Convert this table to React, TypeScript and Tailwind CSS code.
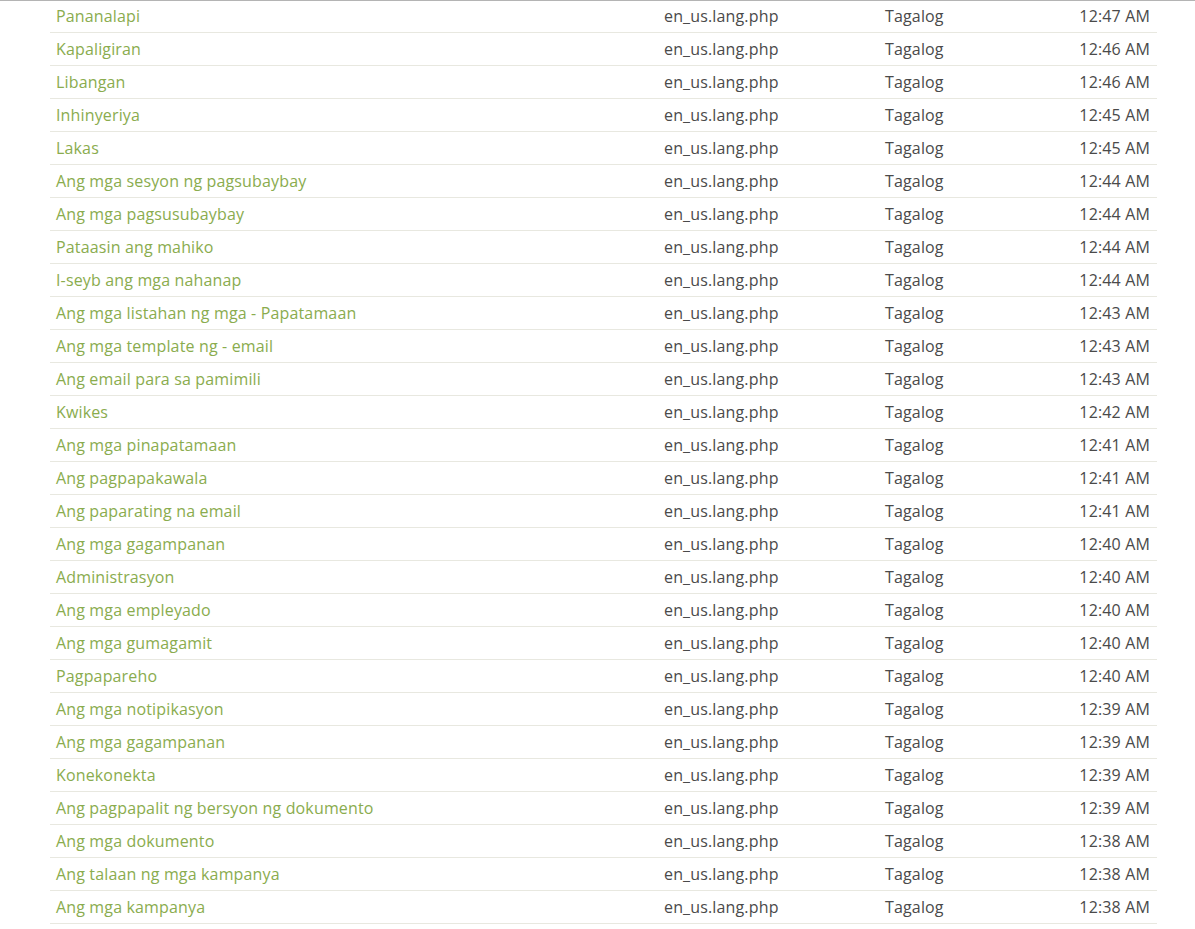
import React from 'react';

const rows: [string, string][] = [
  ['Pananalapi', '12:47 AM'],
  ['Kapaligiran', '12:46 AM'],
  ['Libangan', '12:46 AM'],
  ['Inhinyeriya', '12:45 AM'],
  ['Lakas', '12:45 AM'],
  ['Ang mga sesyon ng pagsubaybay', '12:44 AM'],
  ['Ang mga pagsusubaybay', '12:44 AM'],
  ['Pataasin ang mahiko', '12:44 AM'],
  ['I-seyb ang mga nahanap', '12:44 AM'],
  ['Ang mga listahan ng mga - Papatamaan', '12:43 AM'],
  ['Ang mga template ng - email', '12:43 AM'],
  ['Ang email para sa pamimili', '12:43 AM'],
  ['Kwikes', '12:42 AM'],
  ['Ang mga pinapatamaan', '12:41 AM'],
  ['Ang pagpapakawala', '12:41 AM'],
  ['Ang paparating na email', '12:41 AM'],
  ['Ang mga gagampanan', '12:40 AM'],
  ['Administrasyon', '12:40 AM'],
  ['Ang mga empleyado', '12:40 AM'],
  ['Ang mga gumagamit', '12:40 AM'],
  ['Pagpapareho', '12:40 AM'],
  ['Ang mga notipikasyon', '12:39 AM'],
  ['Ang mga gagampanan', '12:39 AM'],
  ['Konekonekta', '12:39 AM'],
  ['Ang pagpapalit ng bersyon ng dokumento', '12:39 AM'],
  ['Ang mga dokumento', '12:38 AM'],
  ['Ang talaan ng mga kampanya', '12:38 AM'],
  ['Ang mga kampanya', '12:38 AM'],
];

export default function App() {
  return (
    <div className="min-h-[929px] bg-white font-['Open_Sans',sans-serif] text-[16px] tracking-[0.15px]">
      <div className="h-px bg-[#b4b4b4]" />
      <div className="px-[50px] pr-[38px]">
        <table className="w-full border-collapse">
          <tbody>
            {rows.map(([name, time], i) => (
              <tr key={i} className="border-b border-[#e8e8e0]">
                <td className={`${i === 0 ? 'h-[31px]' : 'h-[33px]'} w-[608px] p-0 pl-[6px] align-middle text-[#8aac4e]`}>
                  {name}
                </td>
                <td className="w-[221px] p-0 pl-[6px] align-middle text-[#4a4a4a]">en_us.lang.php</td>
                <td className="p-0 pl-[6px] align-middle text-[#4a4a4a]">Tagalog</td>
                <td className="p-0 pr-[7px] text-right align-middle text-[#4a4a4a]">{time}</td>
              </tr>
            ))}
          </tbody>
        </table>
      </div>
    </div>
  );
}
